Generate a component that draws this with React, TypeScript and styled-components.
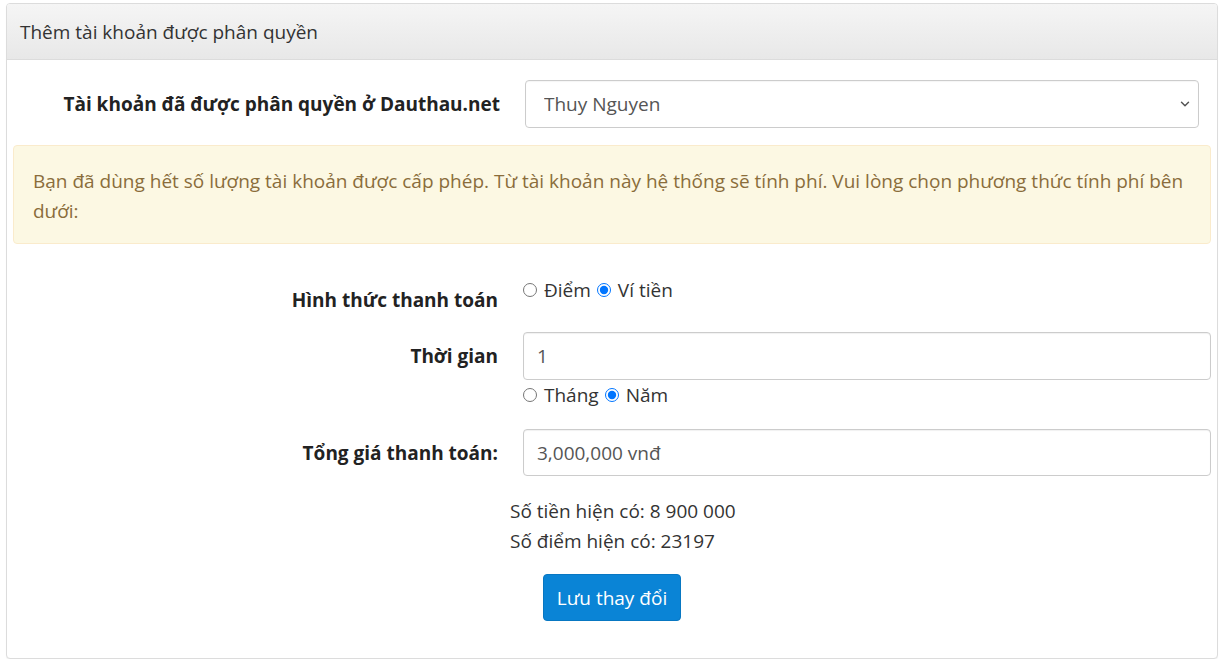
import React from 'react';
import styled, { createGlobalStyle } from 'styled-components';
import { ChevronDown } from 'lucide-react';

const GlobalStyle = createGlobalStyle`
  html, body {
    margin: 0;
    padding: 0;
    background: #fff;
  }
  body {
    font-family: "Open Sans", "Noto Sans", "Liberation Sans", sans-serif;
    font-size: 19px;
    color: #333;
  }
`;

const App: React.FC = () => {
  return (
    <>
      <GlobalStyle />
      <Page>
        <Panel>
          <PanelHeading>Thêm tài khoản được phân quyền</PanelHeading>
          <PanelBody>
            <FormRow $labelWidth={487} $rightPad={12} $top={20}>
              <Label $center>Tài khoản đã được phân quyền ở Dauthau.net</Label>
              <SelectWrap>
                <Select defaultValue="thuy">
                  <option value="thuy">Thuy Nguyen</option>
                </Select>
                <SelectArrow>
                  <ChevronDown size={14} strokeWidth={2.5} />
                </SelectArrow>
              </SelectWrap>
            </FormRow>

            <Alert>
              Bạn đã dùng hết số lượng tài khoản được cấp phép. Từ tài khoản này hệ thống sẽ tính phí. Vui lòng chọn phương thức tính phí bên dưới:
            </Alert>

            <FormRow $labelWidth={485} $top={31}>
              <Label $padTop={13}>Hình thức thanh toán</Label>
              <RadioGroup>
                <RadioLabel>
                  <Radio type="radio" name="pay" /> Điểm
                </RadioLabel>
                <RadioLabel>
                  <Radio type="radio" name="pay" defaultChecked /> Ví tiền
                </RadioLabel>
              </RadioGroup>
            </FormRow>

            <FormRow $labelWidth={485} $top={20}>
              <Label $padTop={12}>Thời gian</Label>
              <div>
                <Input defaultValue="1" />
                <RadioGroup>
                  <RadioLabel>
                    <Radio type="radio" name="time" /> Tháng
                  </RadioLabel>
                  <RadioLabel>
                    <Radio type="radio" name="time" defaultChecked /> Năm
                  </RadioLabel>
                </RadioGroup>
              </div>
            </FormRow>

            <FormRow $labelWidth={485} $top={19}>
              <Label $center>Tổng giá thanh toán:</Label>
              <Input defaultValue="3,000,000 vnđ" $height={47} />
            </FormRow>

            <Info>
              <div>Số tiền hiện có: 8 900 000</div>
              <div>Số điểm hiện có: 23197</div>
            </Info>

            <Actions>
              <PrimaryButton type="button">Lưu thay đổi</PrimaryButton>
            </Actions>
          </PanelBody>
        </Panel>
      </Page>
    </>
  );
};

export default App;

const Page = styled.div`
  padding: 3px 6px 0 6px;
`;

const Panel = styled.div`
  border: 1px solid #dcdcdc;
  border-radius: 4px;
  background: #fff;
  box-shadow: 0 1px 1px rgba(0, 0, 0, 0.05);
  height: 656px;
  box-sizing: border-box;
  overflow: hidden;
`;

const PanelHeading = styled.div`
  height: 56px;
  box-sizing: border-box;
  padding: 0 13px;
  display: flex;
  align-items: center;
  background: linear-gradient(to bottom, #f5f5f5 0%, #e8e8e8 100%);
  border-bottom: 1px solid #dcdcdc;
  color: #333;
  font-size: 19px;
`;

const PanelBody = styled.div`
  padding: 0 6px 36px 6px;
`;

const FormRow = styled.div<{ $labelWidth: number; $rightPad?: number; $top: number }>`
  display: grid;
  grid-template-columns: ${(p) => p.$labelWidth}px 1fr;
  column-gap: 25px;
  padding-right: ${(p) => p.$rightPad ?? 0}px;
  margin-top: ${(p) => p.$top}px;
  align-items: start;
`;

const Label = styled.label<{ $center?: boolean; $padTop?: number }>`
  text-align: right;
  font-weight: 700;
  color: #222;
  line-height: 24px;
  white-space: nowrap;
  align-self: ${(p) => (p.$center ? 'center' : 'start')};
  padding-top: ${(p) => p.$padTop ?? 0}px;
`;

const SelectWrap = styled.div`
  position: relative;
`;

const Select = styled.select`
  appearance: none;
  width: 100%;
  height: 48px;
  box-sizing: border-box;
  border: 1px solid #ccc;
  border-radius: 4px;
  padding: 0 40px 0 18px;
  font-family: inherit;
  font-size: 19px;
  color: #555;
  background: #fff;
  box-shadow: inset 0 1px 1px rgba(0, 0, 0, 0.04);
`;

const SelectArrow = styled.span`
  position: absolute;
  right: 7px;
  top: 50%;
  transform: translateY(-50%);
  display: flex;
  color: #555;
  pointer-events: none;
`;

const Alert = styled.div`
  margin-top: 17px;
  background: #fcf8e3;
  border: 1px solid #faebcc;
  border-radius: 4px;
  color: #8a6d3b;
  padding: 20px 19px 17px 19px;
  line-height: 30px;
`;

const RadioGroup = styled.div`
  display: flex;
  align-items: center;
  gap: 6px;
  height: 30px;
`;

const RadioLabel = styled.label`
  display: inline-flex;
  align-items: center;
  gap: 7px;
  color: #333;
`;

const Radio = styled.input`
  margin: 0;
  width: 14px;
  height: 14px;
`;

const Input = styled.input<{ $height?: number }>`
  display: block;
  width: 100%;
  height: ${(p) => p.$height ?? 48}px;
  box-sizing: border-box;
  border: 1px solid #ccc;
  border-radius: 4px;
  padding: 0 13px;
  font-family: inherit;
  font-size: 19px;
  color: #555;
  box-shadow: inset 0 1px 1px rgba(0, 0, 0, 0.06);
`;

const Info = styled.div`
  margin-top: 20px;
  padding-left: 497px;
  line-height: 30px;
  color: #333;
`;

const Actions = styled.div`
  display: flex;
  justify-content: center;
  margin-top: 18px;
`;

const PrimaryButton = styled.button`
  height: 47px;
  padding: 0 13px;
  background: #0a84d6;
  color: #fff;
  border: 1px solid #0877c2;
  border-radius: 4px;
  font-family: inherit;
  font-size: 19px;
  cursor: pointer;
  &:hover {
    background: #0873bb;
  }
`;
